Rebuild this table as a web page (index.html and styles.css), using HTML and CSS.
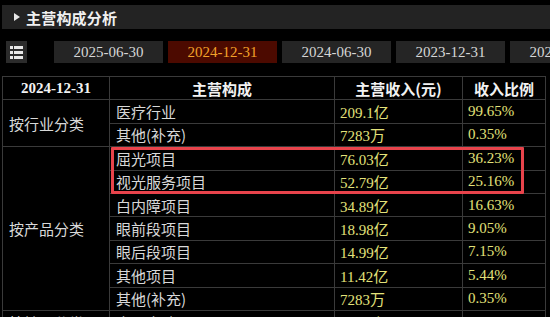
FILE: index.html
```html
<!DOCTYPE html>
<html lang="zh-CN">
<head>
<meta charset="utf-8">
<title>主营构成分析</title>
<link rel="stylesheet" href="styles.css">
</head>
<body>
<div class="page">
  <div class="titlebar">
    <span class="tri"></span>
    <span class="title">主营构成分析</span>
  </div>
  <div class="tabs">
    <div class="menu-btn">
      <svg width="21" height="22" viewBox="0 0 21 22">
        <rect x="4" y="5" width="3" height="3" fill="#e8e8e8"/>
        <rect x="8" y="5" width="9" height="3" fill="#e8e8e8"/>
        <rect x="4" y="10" width="3" height="3" fill="#e8e8e8"/>
        <rect x="8" y="10" width="9" height="3" fill="#e8e8e8"/>
        <rect x="4" y="15" width="3" height="3" fill="#e8e8e8"/>
        <rect x="8" y="15" width="9" height="3" fill="#e8e8e8"/>
      </svg>
    </div>
    <div class="tab-list">
      <div class="tab">2025-06-30</div>
      <div class="tab active">2024-12-31</div>
      <div class="tab">2024-06-30</div>
      <div class="tab">2023-12-31</div>
      <div class="tab">2023-06-30</div>
    </div>
  </div>
  <div class="table-wrap">
    <div class="grid">
      <div class="cell head">2024-12-31</div>
      <div class="cell head">主营构成</div>
      <div class="cell head">主营收入(元)</div>
      <div class="cell head">收入比例</div>

      <div class="cell cat span2">按行业分类</div>
      <div class="cell name">医疗行业</div>
      <div class="cell num">209.1亿</div>
      <div class="cell num">99.65%</div>
      <div class="cell name">其他(补充)</div>
      <div class="cell num">7283万</div>
      <div class="cell num">0.35%</div>

      <div class="cell cat span7">按产品分类</div>
      <div class="cell name">屈光项目</div>
      <div class="cell num">76.03亿</div>
      <div class="cell num">36.23%</div>
      <div class="cell name">视光服务项目</div>
      <div class="cell num">52.79亿</div>
      <div class="cell num">25.16%</div>
      <div class="cell name">白内障项目</div>
      <div class="cell num">34.89亿</div>
      <div class="cell num">16.63%</div>
      <div class="cell name">眼前段项目</div>
      <div class="cell num">18.98亿</div>
      <div class="cell num">9.05%</div>
      <div class="cell name">眼后段项目</div>
      <div class="cell num">14.99亿</div>
      <div class="cell num">7.15%</div>
      <div class="cell name">其他项目</div>
      <div class="cell num">11.42亿</div>
      <div class="cell num">5.44%</div>
      <div class="cell name">其他(补充)</div>
      <div class="cell num">7283万</div>
      <div class="cell num">0.35%</div>

      <div class="cell cat">按地区分类</div>
      <div class="cell name">中国大陆</div>
      <div class="cell num">184.2亿</div>
      <div class="cell num">87.78%</div>
    </div>
    <div class="highlight"></div>
  </div>
</div>
</body>
</html>
```

FILE: styles.css
```css
html, body {
  margin: 0;
  padding: 0;
  background: #000;
  overflow: hidden;
}
body {
  width: 550px;
  height: 317px;
  font-family: "Liberation Serif", "Noto Sans CJK SC", serif;
  color: #dcdcdc;
}
.page {
  padding-top: 5px;
}
.titlebar {
  margin-left: 2px;
  height: 24px;
  background: #232323;
  display: flex;
  align-items: center;
}
.tri {
  width: 0;
  height: 0;
  margin-left: 12px;
  border-top: 4.5px solid transparent;
  border-bottom: 4.5px solid transparent;
  border-left: 6px solid #e6e6e6;
}
.title {
  margin-left: 6px;
  font-family: "Noto Sans CJK SC", sans-serif;
  font-weight: 700;
  font-size: 15px;
  color: #f0f0f0;
  letter-spacing: 0.2px;
}
.tabs {
  margin-top: 12px;
  display: flex;
  align-items: flex-start;
  height: 22px;
}
.menu-btn {
  margin-left: 6px;
  width: 21px;
  height: 22px;
  background: #2b2b2b;
  box-sizing: border-box;
}
.menu-btn svg {
  display: block;
}
.tab-list {
  margin-left: 27px;
  display: flex;
  gap: 5px;
  white-space: nowrap;
}
.tab {
  flex: 0 0 109px;
  height: 22px;
  background: #252525;
  color: #d6d6d6;
  font-size: 15px;
  line-height: 22px;
  text-align: center;
}
.tab.active {
  background: #4c0a00;
  color: #f2a22a;
}
.table-wrap {
  position: relative;
  margin-top: 13px;
  margin-left: 2px;
}
.grid {
  display: grid;
  grid-template-columns: 107px 225px 128px 83px;
  grid-auto-rows: 23.4px;
  border-top: 1px solid #3a3a3a;
  border-left: 1px solid #3a3a3a;
  width: max-content;
}
.cell {
  border-right: 1px solid #3a3a3a;
  border-bottom: 1px solid #3a3a3a;
  font-size: 15px;
  display: flex;
  align-items: center;
  padding-left: 6px;
  white-space: nowrap;
  overflow: hidden;
  box-sizing: border-box;
}
.head {
  justify-content: center;
  padding-left: 0;
  font-weight: 700;
  color: #f2f2f2;
}
.head:not(:first-child) {
  font-family: "Noto Sans CJK SC", sans-serif;
  font-weight: 700;
}
.name, .cat {
  font-family: "Noto Sans CJK SC", sans-serif;
  color: #d8d8d8;
}
.name {
  padding-left: 6px;
}
.num {
  color: #e3e27a;
  padding-left: 5px;
}
.span2 {
  grid-row: span 2;
}
.span7 {
  grid-row: span 7;
}
.highlight {
  position: absolute;
  left: 109px;
  top: 71px;
  width: 407px;
  height: 41px;
  border: 3px solid #e8434b;
  border-radius: 1px;
  pointer-events: none;
}
```
